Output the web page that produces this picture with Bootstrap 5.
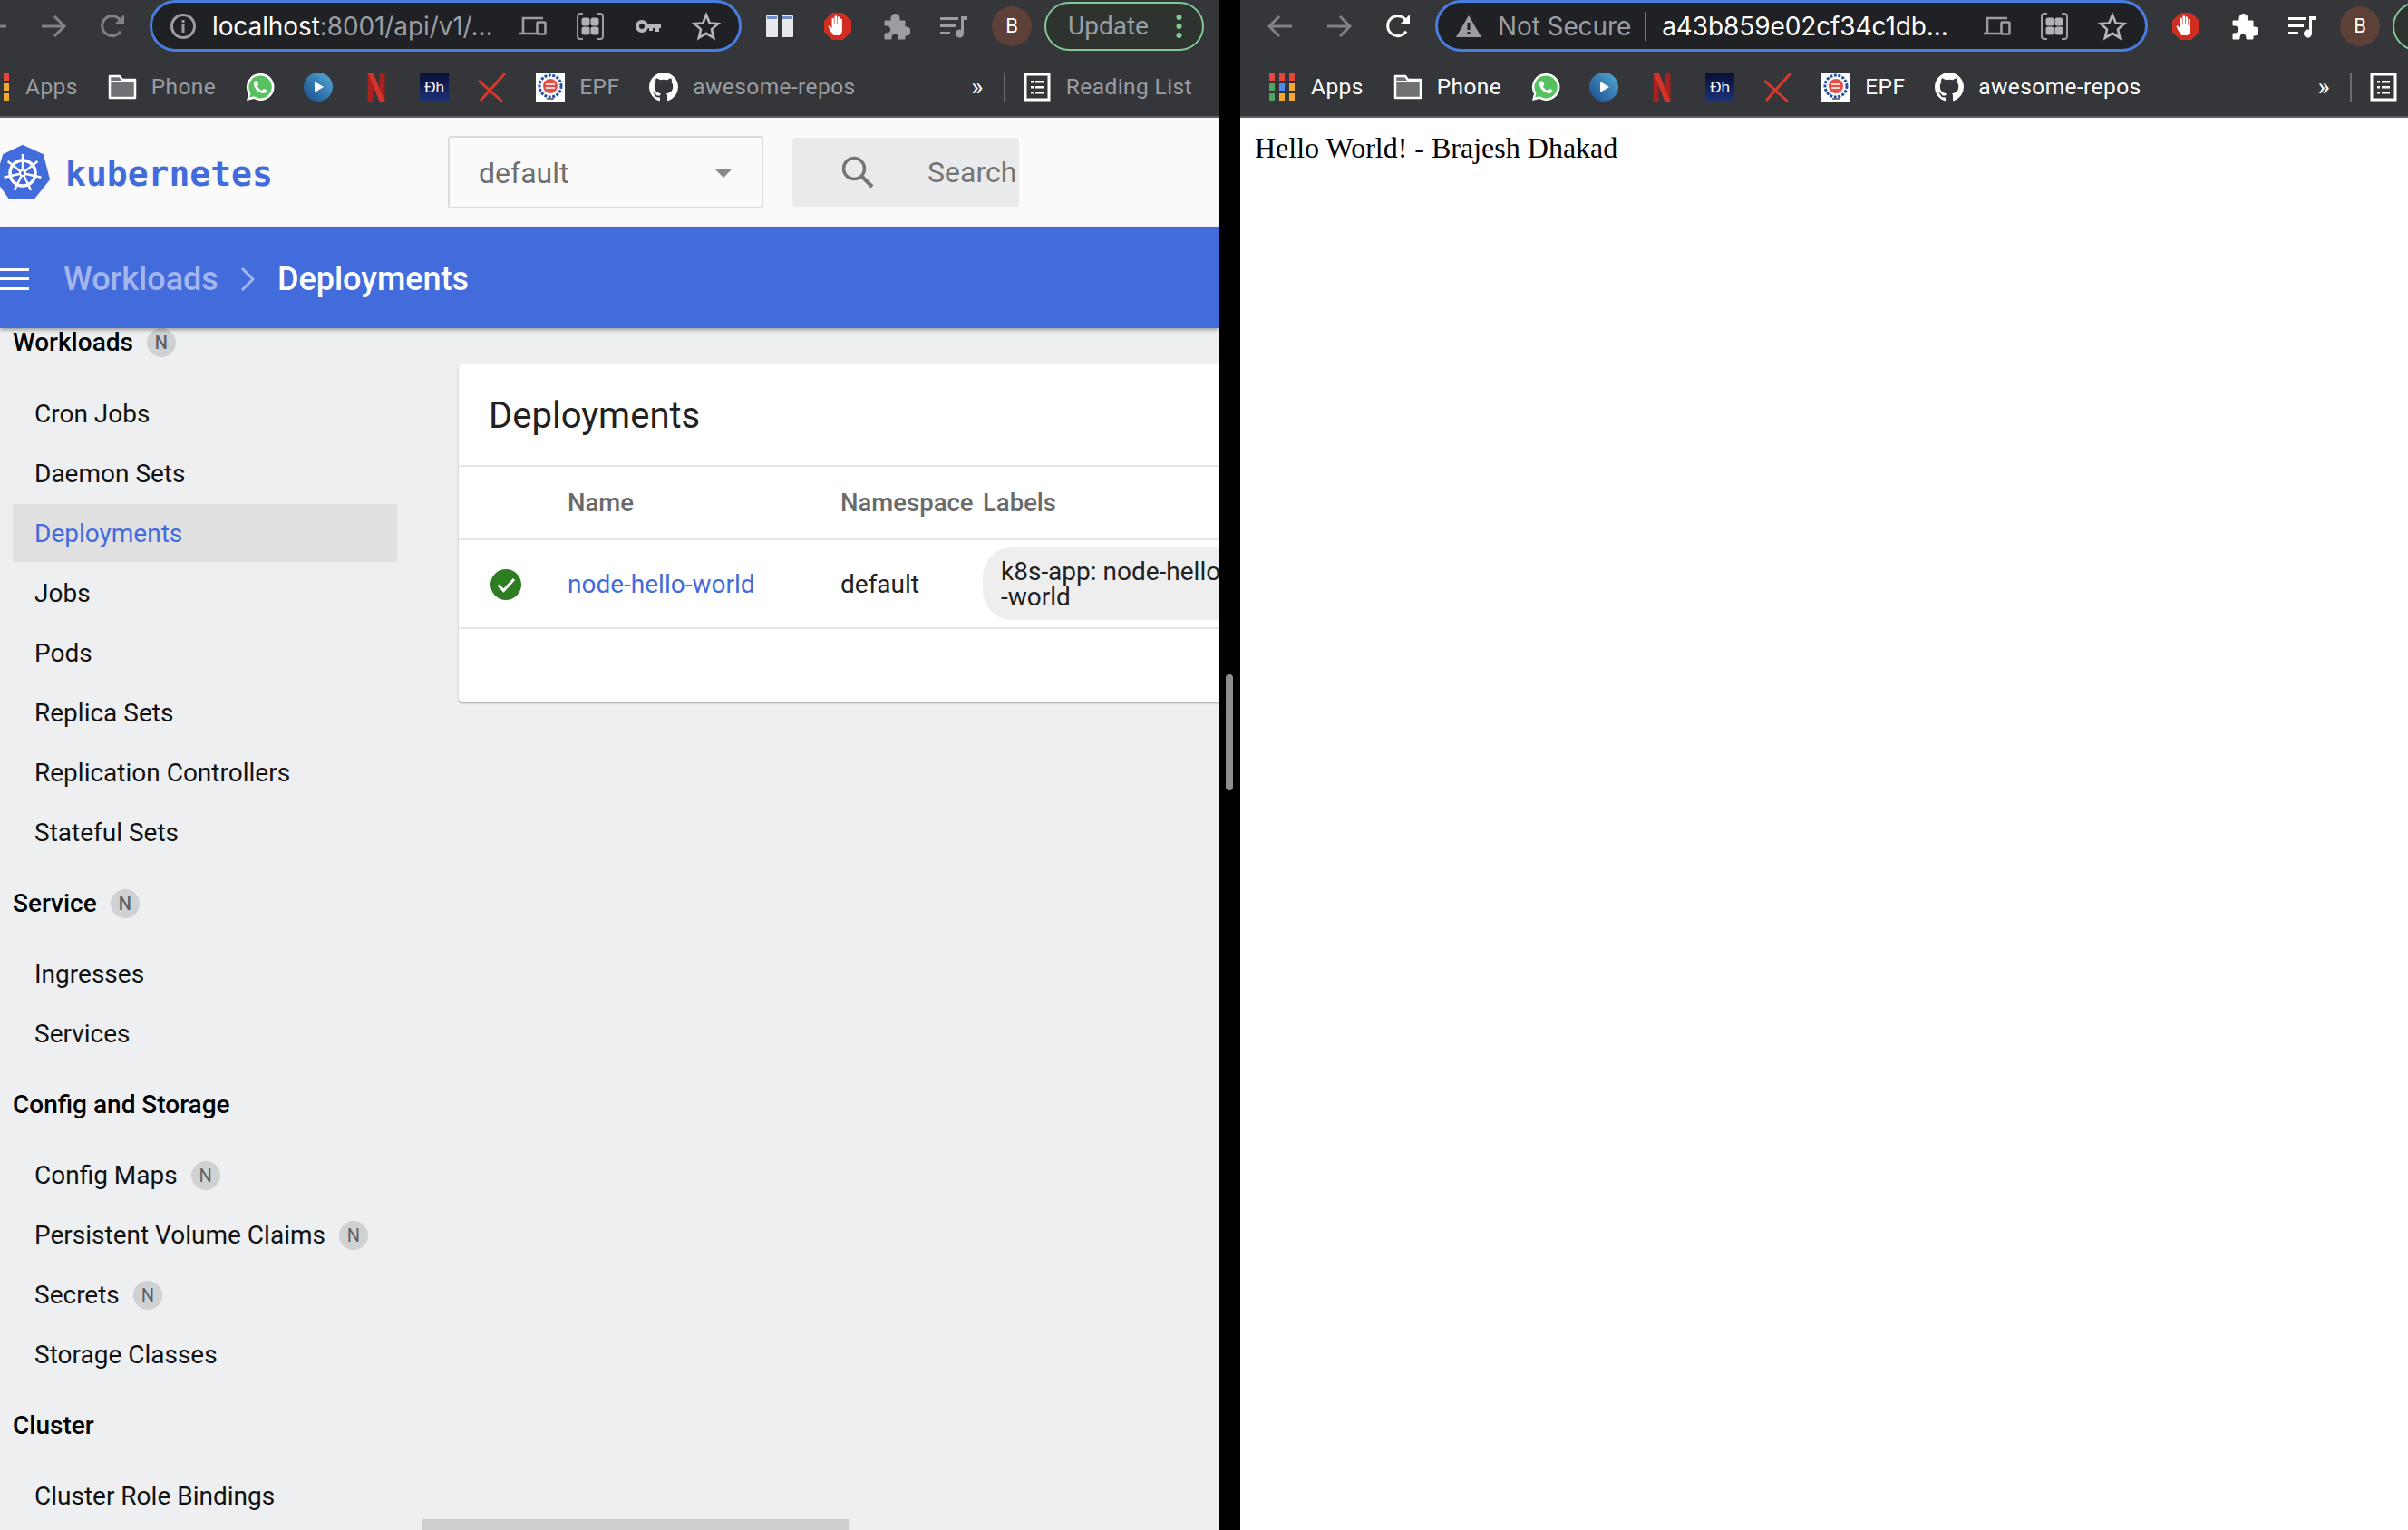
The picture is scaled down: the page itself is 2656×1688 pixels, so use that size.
<!DOCTYPE html>
<html lang="en">
<head>
    <meta charset="UTF-8">
    <title>Kubernetes Dashboard</title>
    <link href="https://cdn.jsdelivr.net/npm/bootstrap@5.3.0/dist/css/bootstrap.min.css" rel="stylesheet">
    <style>
        html, body { height: 1688px; overflow: hidden; }
        body { background: #000; font-family: Roboto, "Liberation Sans", sans-serif; }

        .screen { width: 2656px; height: 1688px; }
        .win-left { width: 1344px; }
        .win-right { width: 1288px; margin-left: 24px; background: #fff; }
        .win-left, .win-right { height: 1688px; overflow: hidden; }

        /* browser chrome */
        .chrome { height: 130px; background: #35363a; border-bottom: 2px solid #5f6065; color: #9a9da2; }
        .win-left .chrome-in { width: 1394px; margin-left: -50px; }
        .win-right .chrome-in { width: 1463px; color: #fff; }
        .tool-row { height: 57px; padding-left: 28px; padding-right: 16px; }
        .slot { width: 32px; height: 32px; flex: none; }
        .slot svg { width: 100%; height: 100%; display: block; }
        .nav-gap { gap: 33px; }
        .nav-dim { color: #808285; }
        .win-right .nav-live { color: #fff; }
        .addr { height: 57px; flex: 1; margin-left: 25px; margin-right: 26px; border: 3px solid #4a7be0; border-radius: 29px;
                background: #202124; padding: 0 20px 0 18px; font-size: 28px; font-family: Inter, Roboto, sans-serif; letter-spacing: -.1px; white-space: nowrap; }
        .addr-host { color: #fff; }
        .addr-dim { color: #9a9da2; }
        .addr-sep { width: 2px; height: 32px; background: #70737a; margin: 0 17px 0 15px; }
        .tool-gap { gap: 32px; }
        .avatar-b { width: 44px; height: 44px; background: #5d4037; color: #fff; border-radius: 50%; font-size: 22px; flex: none; margin-left: 26px; }
        .update-pill { width: 176px; height: 54px; flex: none; margin-left: 14px; border: 2px solid #81c995; border-radius: 27px;
                       background: #2e3330; color: #9a9da2; font-size: 28px; padding: 0 22px 0 24px; }
        .dots-v { width: 7px; height: 28px; }

        .mark-row { height: 71px; padding-left: 30px; padding-top: 7px; font-size: 24.5px; letter-spacing: .4px; white-space: nowrap; }
        .mark-row .slot { margin-right: 32px; }
        .mark-row .slot.lbl { margin-right: 16px; }
        .mark-txt { margin-right: 33px; }
        .mark-end { margin-left: auto; padding-right: 29px; }
        .mark-end .slot.lbl { margin-right: 16px; }
        .read-gap { width: 141px; }
        .mark-sep { width: 2px; height: 32px; background: #6a6c71; margin: 0 19px 0 22px; }
        .win-right .mark-txt { color: #fff; }
        .chev-more { color: #fff; font-size: 28px; line-height: 1; }

        /* dashboard */
        .k-head { height: 120px; background: #fafafa; }
        .k-logo { width: 56px; height: 60px; flex: none; }
        .k-word { color: #426bdc; font-family: "DejaVu Sans Mono", monospace; font-weight: 700; font-size: 38px; margin-left: 16px; width: 422px; padding-top: 4px; }
        .ns-select { width: 348px; height: 80px; border: 2px solid #dcdcdc; border-radius: 3px; font-size: 32px; color: #6f6f6f; padding: 2px 32px 0; flex: none; }
        .ns-caret { width: 0; height: 0; border-left: 10px solid transparent; border-right: 10px solid transparent; border-top: 10px solid #8a8a8a; }
        .k-search { width: 250px; height: 76px; background: #e9eaec; border-radius: 3px; margin-left: 32px; font-size: 32px; color: #757575; overflow: hidden; padding-left: 53px; flex: none; white-space: nowrap; }
        .k-search svg { width: 38px; height: 38px; margin-right: 58px; flex: none; }

        .k-band { height: 112px; background: #426bdc; color: #fff; font-size: 36px; font-weight: 500; padding-top: 3px; box-shadow: 0 2px 4px rgba(0,0,0,.35); position: relative; z-index: 2; }
        .burger { width: 32px; margin-right: 38px; }
        .burger i { display: block; height: 3px; background: #fff; margin: 7.5px 0; }
        .crumb-dim { color: #a4b6ee; }
        .crumb-chev { width: 18px; height: 30px; margin: 0 24px 0 23px; }

        .k-body { height: 1326px; background: #eeeff1; position: relative; }
        .k-side { width: 466px; flex: none; padding-left: 14px; font-size: 28px; color: #111; white-space: nowrap; }
        .side-head { height: 32px; line-height: 32px; font-weight: 500; color: #000; margin: 30px 0 30px; padding-top: 1px; }
        .side-head:first-child { margin-top: 0; padding-top: 0; }
        .side-item { height: 64px; margin-bottom: 2px; padding-left: 24px; padding-top: 2px; width: 424px; }
        .side-item.on { background: #e0e0e0; color: #426bdc; }
        .n-tag { width: 32px; height: 32px; border-radius: 50%; background: #d0d1d3; color: #5f6164; font-size: 20px; margin-left: 15px; }

        .k-main { padding: 40px 0 0 40px; overflow: hidden; flex: 1; }
        .k-card { width: 1300px; height: 372px; background: #fff; border-radius: 4px 0 0 4px; box-shadow: 0 2px 2px rgba(0,0,0,.3); }
        .k-title { height: 113px; padding-left: 33px; padding-top: 2px; font-size: 40px; color: #212121; border-bottom: 2px solid #e6e6e6; }
        .k-table { table-layout: fixed; width: 1000px; margin: 0; font-size: 28px; }
        .k-table th { height: 80px; font-weight: 500; color: #6a6a6a; font-size: 27.5px; vertical-align: middle; border-bottom: 2px solid #e6e6e6; padding: 0; }
        .k-table td { height: 98px; vertical-align: middle; border-bottom: 2px solid #e6e6e6; padding: 0; color: #212121; }
        .k-table td.cell-low { padding-top: 2px; }
        .k-table a { color: #426bdc; text-decoration: none; }
        .col-st { width: 120px; padding-left: 35px !important; }
        .col-nm { width: 301px; }
        .col-ns { width: 157px; }
        .st-ok { width: 34px; height: 34px; display: block; }
        .label-chip { display: inline-block; background: #eee; border-radius: 32px; height: 80px; padding: 13px 20px; line-height: 28px; white-space: nowrap; width: 400px; }

        .h-scroll { width: 470px; height: 12px; background: #cdced0; position: absolute; left: 466px; bottom: 0; }
        .v-scroll { width: 8px; height: 128px; background: #8e8e8e; border-radius: 4px; position: absolute; left: 1352px; top: 744px; }

        .hello { font-family: "Liberation Serif", serif; font-size: 32px; color: #000; padding: 15px 0 0 16px; line-height: 37px; }
        .dh-txt { font-family: "Liberation Sans", sans-serif; font-size: 17px; letter-spacing: 0; fill: #fff; }
    </style>
</head>
<body>
<svg width="0" height="0" class="position-absolute">
    <defs><linearGradient id="g-dh" x1="0" y1="0" x2="0" y2="1"><stop offset="0" stop-color="#070d35"/><stop offset="1" stop-color="#1e3378"/></linearGradient></defs>
    <symbol id="i-back" viewBox="0 0 32 32"><path d="M29 16H5M15 5 4 16l11 11" fill="none" stroke="currentColor" stroke-width="3"/></symbol>
    <symbol id="i-fwd" viewBox="0 0 32 32"><path d="M3 16h24M17 5l11 11-11 11" fill="none" stroke="currentColor" stroke-width="3"/></symbol>
    <symbol id="i-reload" viewBox="0 0 32 32"><path d="M25 21.500A11 11 0 1 1 24.500 9" fill="none" stroke="currentColor" stroke-width="3"/><path d="M29 3v11H18z" fill="currentColor"/></symbol>
    <symbol id="i-info" viewBox="0 0 32 32"><circle cx="16" cy="16" r="12.500" fill="none" stroke="#9a9da2" stroke-width="3"/><path d="M14.500 14h3v9h-3zM14.500 9h3v3h-3z" fill="#9a9da2"/></symbol>
    <symbol id="i-warn" viewBox="0 0 32 32"><path d="M16 4 30 28H2z" fill="#9a9da2"/><path d="M14.500 12h3v8h-3zM14.500 22h3v3h-3z" fill="#202124"/></symbol>
    <symbol id="i-device" viewBox="0 0 32 32"><path d="M28 7H6v16M2 24h19" fill="none" stroke="#9a9da2" stroke-width="2.600"/><rect x="21.500" y="11.500" width="9" height="13" rx="1" fill="none" stroke="#9a9da2" stroke-width="2.600"/></symbol>
    <symbol id="i-cast" viewBox="0 0 32 32"><path d="M8 2H5a3 3 0 0 0-3 3v3M24 2h3a3 3 0 0 1 3 3v3M8 30H5a3 3 0 0 1-3-3v-3M24 30h3a3 3 0 0 0 3-3v-3M2 8v16M30 8v16" fill="none" stroke="#9a9da2" stroke-width="2"/><rect x="6.500" y="6.500" width="9" height="9" rx="2.500" fill="#b0b2b5"/><rect x="16.500" y="6.500" width="9" height="9" rx="2.500" fill="#b0b2b5"/><rect x="6.500" y="16.500" width="9" height="9" rx="2.500" fill="#b0b2b5"/><rect x="16.500" y="16.500" width="9" height="9" rx="2.500" fill="#b0b2b5"/></symbol>
    <symbol id="i-key" viewBox="0 0 32 32"><circle cx="9" cy="16" r="5" fill="none" stroke="#b5b7ba" stroke-width="4"/><path d="M13 14h17v4h-2v4h-4v-4h-3v3h-4v-3h-4z" fill="#b5b7ba"/></symbol>
    <symbol id="i-star" viewBox="0 0 32 32"><path d="M16 3.500 19.700 12.500 29 13.200 22 19.400 24.200 28.700 16 23.800 7.800 28.700 10 19.400 3 13.200 12.300 12.500z" fill="none" stroke="#b5b7ba" stroke-width="2.600"/></symbol>
    <symbol id="i-tabs" viewBox="0 0 32 32"><rect x="1" y="4" width="13" height="24" rx="1" fill="#e6e8ea"/><rect x="18" y="4" width="13" height="24" rx="1" fill="#e6e8ea"/><path d="M2 5h11v3H2zM19 5h11v3H19z" fill="#6f8fc9"/></symbol>
    <symbol id="i-adb" viewBox="0 0 32 32"><path d="M10 1h12l9 9v12l-9 9H10l-9-9V10z" fill="#d22d21"/><path d="M11 25c-3-3-5-7-5.500-9 .8-1 2-.4 2.500.5l1.500 2V8c0-1.800 2.300-1.800 2.400 0v6h.6V5.500c0-1.800 2.500-1.800 2.500 0V14h.6V6.500c0-1.800 2.400-1.800 2.400 0V15h.6V9c0-1.800 2.300-1.800 2.300 0v11c0 3-1 5-3 6h-7z" fill="#fff"/></symbol>
    <symbol id="i-puzzle" viewBox="0 0 32 32"><path d="M4 10h7V7a4.500 4.500 0 0 1 9 0v3h6v7h2a4.500 4.500 0 0 1 0 9h-2v4h-7v-2a4 4 0 0 0-8 0v2H4v-6h2a4.500 4.500 0 0 0 0-9H4z" fill="currentColor" stroke="currentColor" stroke-linejoin="round"/></symbol>
    <symbol id="i-queue" viewBox="0 0 32 32"><path d="M1 6h20v3H1zM1 14h17v3H1zM1 22h11v3H1z" fill="currentColor"/><path d="M24 5h7v4h-4v15a4.500 4.500 0 1 1-3-4.200z" fill="currentColor"/></symbol>
    <symbol id="i-apps" viewBox="0 0 32 32"><rect x="2" y="1" width="6" height="8" fill="#e8453c"/><rect x="13" y="1" width="6" height="8" fill="#e8453c"/><rect x="24" y="1" width="6" height="8" fill="#e8453c"/><rect x="2" y="12" width="6" height="8" fill="#4fa55f"/><rect x="13" y="12" width="6" height="8" fill="#4c8bf5"/><rect x="24" y="12" width="6" height="8" fill="#f0ab2e"/><rect x="2" y="23" width="6" height="8" fill="#4fa55f"/><rect x="13" y="23" width="6" height="8" fill="#f0ab2e"/><rect x="24" y="23" width="6" height="8" fill="#f0ab2e"/></symbol>
    <symbol id="i-folder" viewBox="0 0 32 32"><path d="M2 4h11l3 4h14v20H2z" fill="#707175" stroke="#fff" stroke-width="2.500" stroke-linejoin="round"/><path d="M2 10h28" stroke="#fff" stroke-width="2"/></symbol>
    <symbol id="i-wa" viewBox="0 0 32 32"><path d="M16 1a15 15 0 0 0-13 22.500L1 31l8-2A15 15 0 1 0 16 1z" fill="#fff"/><path d="M16 3.500a12.500 12.500 0 0 0-10.600 19.200L4.200 27.500l5-1.200A12.500 12.500 0 1 0 16 3.500z" fill="#56c15e"/><path d="M11.500 9c-1 0-2.500 1.500-2.500 4 0 4 5.500 10 10.500 10 2.500 0 4-1.700 4-3 0-.6-3.200-2.200-3.700-2-.5.200-1.300 1.700-1.800 1.700-1.500 0-4.700-3-5-4.500 0-.5 1.300-1.300 1.300-2C14.300 12.500 12.200 9 11.500 9z" fill="#fff"/></symbol>
    <symbol id="i-play" viewBox="0 0 32 32"><defs><linearGradient id="g-play" x1="1" y1="0" x2="0" y2="1"><stop offset="0" stop-color="#55acd8"/><stop offset="1" stop-color="#174a8a"/></linearGradient></defs><circle cx="16" cy="16" r="16" fill="url(#g-play)"/><path d="M12 10v12l10-6z" fill="#fff"/></symbol>
    <symbol id="i-netflix" viewBox="0 0 19 32"><path d="M0 0h6v32H0z" fill="#a9211c"/><path d="M13 0h6v32h-6z" fill="#a9211c"/><path d="M0 0h6l13 32h-6z" fill="#d4332b"/></symbol>
    <symbol id="i-x" viewBox="0 0 32 32"><path d="M30 1 3 31M1 9l26 23" fill="none" stroke="#d8392d" stroke-width="3"/></symbol>
    <symbol id="i-epf" viewBox="0 0 32 32"><rect width="32" height="32" fill="#fff"/><circle cx="16" cy="15" r="12" fill="none" stroke="#2550a8" stroke-width="3" stroke-dasharray="3 1.500"/><circle cx="16" cy="15" r="8" fill="#e2504a"/><path d="M11 13h10M11 17h10" stroke="#fff" stroke-width="1.500"/><path d="M12 29h8" stroke="#555" stroke-width="1.500"/></symbol>
    <symbol id="i-gh" viewBox="0 0 16 16"><path d="M8 0C3.580 0 0 3.580 0 8c0 3.540 2.290 6.530 5.470 7.590.4.070.55-.170.55-.380 0-.190-.010-.820-.010-1.490-2.010.370-2.530-.490-2.690-.940-.090-.230-.480-.940-.820-1.130-.280-.150-.680-.520-.010-.530.630-.010 1.080.580 1.230.820.720 1.210 1.870.870 2.330.660.070-.520.280-.870.510-1.070-1.780-.200-3.640-.890-3.640-3.950 0-.870.310-1.590.820-2.150-.080-.200-.360-1.020.080-2.120 0 0 .670-.210 2.200.820.640-.180 1.320-.270 2-.270s1.360.090 2 .270c1.530-1.040 2.200-.820 2.200-.820.440 1.100.160 1.920.080 2.120.510.560.820 1.270.820 2.150 0 3.070-1.870 3.750-3.650 3.950.290.250.540.730.540 1.480 0 1.070-.010 1.930-.010 2.200 0 .210.150.460.550.380A8.010 8.010 0 0 0 16 8c0-4.420-3.580-8-8-8z" fill="#fff"/></symbol>
    <symbol id="i-read" viewBox="0 0 32 32"><rect x="3" y="2" width="26" height="28" fill="none" stroke="#fff" stroke-width="3"/><path d="M9 9h3v2.500H9zM14 9h9v2.500h-9zM9 15h3v2.500H9zM14 15h9v2.500h-9zM9 21h3v2.500H9zM14 21h9v2.500h-9z" fill="#fff"/></symbol>
</svg>

<div class="screen d-flex">
    <div class="win-left position-relative">
        <div class="chrome">
            <div class="chrome-in">
                <div class="tool-row d-flex align-items-center">
                    <div class="d-flex nav-gap nav-dim">
                        <div class="slot"><svg><use href="#i-back"/></svg></div>
                        <div class="slot"><svg><use href="#i-fwd"/></svg></div>
                        <div class="slot"><svg><use href="#i-reload"/></svg></div>
                    </div>
                    <div class="addr d-flex align-items-center">
                        <div class="slot me-3"><svg><use href="#i-info"/></svg></div>
                        <span class="addr-host">localhost</span><span class="addr-dim">:8001/api/v1/...</span>
                        <div class="d-flex tool-gap ms-auto">
                            <div class="slot"><svg><use href="#i-device"/></svg></div>
                            <div class="slot"><svg><use href="#i-cast"/></svg></div>
                            <div class="slot"><svg><use href="#i-key"/></svg></div>
                            <div class="slot"><svg><use href="#i-star"/></svg></div>
                        </div>
                    </div>
                    <div class="d-flex tool-gap">
                        <div class="slot"><svg><use href="#i-tabs"/></svg></div>
                        <div class="slot"><svg><use href="#i-adb"/></svg></div>
                        <div class="slot"><svg><use href="#i-puzzle"/></svg></div>
                        <div class="slot"><svg><use href="#i-queue"/></svg></div>
                    </div>
                    <div class="avatar-b d-flex align-items-center justify-content-center">B</div>
                    <div class="update-pill d-flex align-items-center justify-content-between">
                        <span>Update</span>
                        <svg class="dots-v" viewBox="0 0 7 28"><circle cx="3.500" cy="4" r="3" fill="#81c995"/><circle cx="3.500" cy="14" r="3" fill="#81c995"/><circle cx="3.500" cy="24" r="3" fill="#81c995"/></svg>
                    </div>
                </div>
                <div class="mark-row d-flex align-items-center">
                    <div class="slot lbl"><svg><use href="#i-apps"/></svg></div><span class="mark-txt">Apps</span>
                    <div class="slot lbl"><svg><use href="#i-folder"/></svg></div><span class="mark-txt">Phone</span>
                    <div class="slot"><svg><use href="#i-wa"/></svg></div>
                    <div class="slot"><svg><use href="#i-play"/></svg></div>
                    <div class="slot"><svg><use href="#i-netflix"/></svg></div>
                    <div class="slot"><svg viewBox="0 0 32 32"><rect width="32" height="32" fill="url(#g-dh)"/><text class="dh-txt" x="16" y="22" text-anchor="middle">Ðh</text></svg></div>
                    <div class="slot"><svg><use href="#i-x"/></svg></div>
                    <div class="slot lbl"><svg><use href="#i-epf"/></svg></div><span class="mark-txt">EPF</span>
                    <div class="slot lbl"><svg><use href="#i-gh"/></svg></div><span class="mark-txt">awesome-repos</span>
                    <div class="mark-end d-flex align-items-center">
                        <span class="chev-more">»</span><div class="mark-sep"></div>
                        <div class="slot lbl"><svg><use href="#i-read"/></svg></div><span>Reading List</span>
                    </div>
                </div>
            </div>
        </div>

        <div class="k-head d-flex align-items-center">
            <svg class="k-logo" viewBox="0 0 56 60">
                <path d="M25 1 47 11 54 38 38 58H10L-4 38 4 11z" fill="#426bdc" stroke="#426bdc" stroke-width="2" stroke-linejoin="round"/>
                <g fill="none" stroke="#fff">
                    <circle cx="25" cy="31" r="14" stroke-width="3.500"/>
                    <circle cx="25" cy="31" r="3" stroke-width="2"/>
                    <g stroke-width="2.500">
                        <path d="M25 28V10"/>
                        <path d="M25 28V10" transform="rotate(51.430 25 31)"/>
                        <path d="M25 28V10" transform="rotate(102.860 25 31)"/>
                        <path d="M25 28V10" transform="rotate(154.290 25 31)"/>
                        <path d="M25 28V10" transform="rotate(205.710 25 31)"/>
                        <path d="M25 28V10" transform="rotate(257.140 25 31)"/>
                        <path d="M25 28V10" transform="rotate(308.570 25 31)"/>
                    </g>
                </g>
            </svg>
            <div class="k-word">kubernetes</div>
            <div class="ns-select d-flex align-items-center justify-content-between">
                <span>default</span><span class="ns-caret"></span>
            </div>
            <div class="k-search d-flex align-items-center">
                <svg viewBox="0 0 38 38"><circle cx="15" cy="15" r="11.500" fill="none" stroke="#757575" stroke-width="3.500"/><path d="M23.500 23.500 35 35" stroke="#757575" stroke-width="4"/></svg>
                <span>Search</span>
            </div>
        </div>
        <div class="k-band d-flex align-items-center">
            <div class="burger"><i></i><i></i><i></i></div>
            <span class="crumb-dim">Workloads</span>
            <svg class="crumb-chev" viewBox="0 0 18 30"><path d="M3 3l12 12L3 27" fill="none" stroke="#a4b6ee" stroke-width="3"/></svg>
            <span>Deployments</span>
        </div>
        <div class="k-body d-flex">
            <nav class="k-side" id="sideNav"></nav>
            <div class="k-main">
                <div class="k-card">
                    <div class="k-title d-flex align-items-center">Deployments</div>
                    <table class="table k-table">
                        <thead>
                            <tr><th class="col-st"></th><th class="col-nm">Name</th><th class="col-ns">Namespace</th><th>Labels</th></tr>
                        </thead>
                        <tbody>
                            <tr>
                                <td class="col-st cell-low"><svg class="st-ok" viewBox="0 0 34 34"><circle cx="17" cy="17" r="17" fill="#2e7d23"/><path d="M8.500 17.500 14.500 23.500 26 11" fill="none" stroke="#fff" stroke-width="3"/></svg></td>
                                <td class="cell-low"><a href="#">node-hello-world</a></td>
                                <td class="cell-low">default</td>
                                <td><span class="label-chip">k8s-app: node-hello<br>-world</span></td>
                            </tr>
                        </tbody>
                    </table>
                </div>
            </div>
            <div class="h-scroll"></div>
        </div>
    </div>

    <div class="win-right">
        <div class="chrome">
            <div class="chrome-in">
                <div class="tool-row d-flex align-items-center">
                    <div class="d-flex nav-gap nav-dim">
                        <div class="slot"><svg><use href="#i-back"/></svg></div>
                        <div class="slot"><svg><use href="#i-fwd"/></svg></div>
                        <div class="slot nav-live"><svg><use href="#i-reload"/></svg></div>
                    </div>
                    <div class="addr d-flex align-items-center">
                        <div class="slot me-3"><svg><use href="#i-warn"/></svg></div>
                        <span class="addr-dim">Not Secure</span><span class="addr-sep"></span><span class="addr-host">a43b859e02cf34c1db...</span>
                        <div class="d-flex tool-gap ms-auto">
                            <div class="slot"><svg><use href="#i-device"/></svg></div>
                            <div class="slot"><svg><use href="#i-cast"/></svg></div>
                            <div class="slot"><svg><use href="#i-star"/></svg></div>
                        </div>
                    </div>
                    <div class="d-flex tool-gap">
                        <div class="slot"><svg><use href="#i-adb"/></svg></div>
                        <div class="slot"><svg><use href="#i-puzzle"/></svg></div>
                        <div class="slot"><svg><use href="#i-queue"/></svg></div>
                    </div>
                    <div class="avatar-b d-flex align-items-center justify-content-center">B</div>
                    <div class="update-pill"></div>
                </div>
                <div class="mark-row d-flex align-items-center">
                    <div class="slot lbl"><svg><use href="#i-apps"/></svg></div><span class="mark-txt">Apps</span>
                    <div class="slot lbl"><svg><use href="#i-folder"/></svg></div><span class="mark-txt">Phone</span>
                    <div class="slot"><svg><use href="#i-wa"/></svg></div>
                    <div class="slot"><svg><use href="#i-play"/></svg></div>
                    <div class="slot"><svg><use href="#i-netflix"/></svg></div>
                    <div class="slot"><svg viewBox="0 0 32 32"><rect width="32" height="32" fill="url(#g-dh)"/><text class="dh-txt" x="16" y="22" text-anchor="middle">Ðh</text></svg></div>
                    <div class="slot"><svg><use href="#i-x"/></svg></div>
                    <div class="slot lbl"><svg><use href="#i-epf"/></svg></div><span class="mark-txt">EPF</span>
                    <div class="slot lbl"><svg><use href="#i-gh"/></svg></div><span class="mark-txt">awesome-repos</span>
                    <div class="mark-end d-flex align-items-center">
                        <span class="chev-more">»</span><div class="mark-sep"></div>
                        <div class="slot lbl"><svg><use href="#i-read"/></svg></div><div class="read-gap"></div>
                    </div>
                </div>
            </div>
        </div>
        <div class="hello">Hello World! - Brajesh Dhakad</div>
    </div>
</div>
<div class="v-scroll"></div>

<script src="https://cdn.jsdelivr.net/npm/bootstrap@5.3.0/dist/js/bootstrap.bundle.min.js"></script>
<script>
    const sideMenu = [
        ['h', 'Workloads', true],
        ['i', 'Cron Jobs'], ['i', 'Daemon Sets'], ['a', 'Deployments'], ['i', 'Jobs'], ['i', 'Pods'],
        ['i', 'Replica Sets'], ['i', 'Replication Controllers'], ['i', 'Stateful Sets'],
        ['h', 'Service', true],
        ['i', 'Ingresses'], ['i', 'Services'],
        ['h', 'Config and Storage'],
        ['i', 'Config Maps', true], ['i', 'Persistent Volume Claims', true], ['i', 'Secrets', true], ['i', 'Storage Classes'],
        ['h', 'Cluster'],
        ['i', 'Cluster Role Bindings']
    ];

    document.getElementById('sideNav').innerHTML = sideMenu.map(([type, text, ns]) => {
        const tag = ns ? '<span class="n-tag d-flex align-items-center justify-content-center">N</span>' : '';
        const cls = type === 'h' ? 'side-head' : 'side-item' + (type === 'a' ? ' on' : '');
        return `<div class="${cls} d-flex align-items-center">${text}${tag}</div>`;
    }).join('');
</script>
</body>
</html>
